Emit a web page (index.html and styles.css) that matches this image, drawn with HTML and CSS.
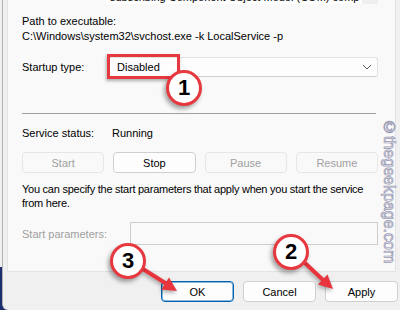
FILE: index.html
```html
<!DOCTYPE html>
<html lang="en">
<head>
  <meta charset="UTF-8" />
  <title>Service Properties</title>
  <link rel="stylesheet" href="styles.css">
</head>
<body>
  <div class="screen">
    <div class="window">
      <div class="panel">
        <!-- description box, scrolled off the top -->
        <div class="desc">
          <span class="desc-text">subscribing Component Object Model (COM) comp</span>
          <i class="desc-scroll"></i>
        </div>

        <div class="path">
          <div>Path to executable:</div>
          <div>C:\Windows\system32\svchost.exe -k LocalService -p</div>
        </div>

        <div class="row startup">
          <span class="label">Startup type:</span>
          <div class="select">
            <span>Disabled</span>
            <svg class="chevron" width="10" height="6" viewBox="0 0 10 6"><path d="M1 1 L5 5 L9 1" fill="none" stroke="#5a5a5a" stroke-width="1"/></svg>
          </div>
        </div>

        <div class="sep"></div>

        <div class="row status">
          <span class="label status-label">Service status:</span>
          <span>Running</span>
        </div>

        <div class="btn-row">
          <button class="btn" disabled>Start</button>
          <button class="btn">Stop</button>
          <button class="btn" disabled>Pause</button>
          <button class="btn" disabled>Resume</button>
        </div>

        <p class="hint">You can specify the start parameters that apply when you start the service<br>from here.</p>

        <div class="row params">
          <span class="label params-label">Start parameters:</span>
          <div class="input"></div>
        </div>
      </div>

      <div class="footer">
        <button class="btn wide default">OK</button>
        <button class="btn wide">Cancel</button>
        <button class="btn wide">Apply</button>
      </div>
    </div>

    <!-- annotations -->
    <div class="mark"></div>
    <svg class="arrows" width="400" height="310" viewBox="0 0 400 310">
      <line x1="143" y1="269" x2="166" y2="283.5" stroke="#e8343c" stroke-width="4"/>
      <polygon points="177,291 161.4,289.4 169,277.6" fill="#e8343c"/>
      <line x1="305" y1="263" x2="323" y2="280" stroke="#e8343c" stroke-width="4"/>
      <polygon points="333,289 317.9,284.6 327.5,274.4" fill="#e8343c"/>
    </svg>
    <div class="badge badge-1">1</div>
    <div class="badge badge-2">2</div>
    <div class="badge badge-3">3</div>

    <div class="watermark">©thegeekpage.com</div>
  </div>
</body>
</html>
```

FILE: styles.css
```css
body {
  margin: 0;
  font-family: 'Liberation Sans', Arial, sans-serif;
  font-size: 11px;
  color: #000;
  background-color: #f0f0f0;
}

.screen {
  position: relative;
  width: 400px;
  height: 310px;
  overflow: hidden;
  background: linear-gradient(#f0f0f0 86%, #1d2f73 86%);
}

.window {
  margin-left: 2px;
  height: 310px;
  background-color: #f0f0f0;
  border-left: 1px solid #b4b4b4;
  border-bottom-left-radius: 6px;
}

.panel {
  margin-left: 4px;
  width: 389px;
  height: 272px;
  box-sizing: border-box;
  padding: 0 17px 0 14px;
  background-color: #f9f9f9;
  border: 1px solid #e3e3e3;
  border-top: none;
}

/* cut-off description box */
.desc {
  display: flex;
  height: 4px;
  margin-left: 84px;
  overflow: hidden;
}

.desc-text {
  flex: 1;
  padding-left: 4px;
  margin-top: -10px;
  line-height: 14px;
  background-color: #fff;
  white-space: nowrap;
  overflow: hidden;
}

.desc-scroll {
  width: 16px;
  background-color: #efefef;
}

.path {
  margin-top: 10px;
  line-height: 15px;
}

.row {
  display: flex;
  align-items: center;
}

.label {
  flex: none;
}

.startup {
  margin-top: 13px;
}

.startup .label {
  width: 86px;
}

.select {
  flex: 1;
  height: 20px;
  box-sizing: border-box;
  display: flex;
  align-items: center;
  justify-content: space-between;
  padding: 0 5px 0 8px;
  background-color: #fdfdfd;
  border: 1px solid #e2e2e2;
  border-bottom-color: #d0d0d0;
  border-radius: 3px;
}

.sep {
  margin-top: 36px;
  margin-right: 2px;
  height: 1px;
  background-color: #a0a0a0;
}

.status {
  margin-top: 12px;
  line-height: 15px;
}

.status-label {
  width: 90px;
}

.btn-row {
  margin-top: 11px;
  display: grid;
  grid-template-columns: repeat(4, 1fr);
  gap: 9px;
}

.btn {
  height: 21px;
  padding: 0;
  font-family: 'Liberation Sans', Arial, sans-serif;
  font-size: 11px;
  color: #000;
  background-color: #fdfdfd;
  border: 1px solid #d0d0d0;
  border-radius: 4px;
}

.btn:disabled {
  color: #a0a0a0;
  background-color: #f9f9f9;
  border-color: #e6e6e6;
}

.hint {
  margin: 9px 0 0;
  line-height: 14px;
  letter-spacing: -0.25px;
  white-space: nowrap;
}

.params {
  margin-top: 12px;
}

.params-label {
  width: 108px;
  color: #a0a0a0;
}

.input {
  flex: 1;
  height: 23px;
  box-sizing: border-box;
  border: 1px solid #cdcdcd;
  background-color: #f9f9f9;
}

.footer {
  display: flex;
  justify-content: flex-end;
  gap: 9px;
  padding: 9px 2px 0 0;
}

.wide {
  width: 73px;
}

.default {
  border-color: #0063b1;
  box-shadow: inset 0 0 0 1px rgba(0, 99, 177, 0.45);
}

/* annotations */
.mark {
  position: absolute;
  left: 107px;
  top: 54px;
  width: 67px;
  height: 19px;
  border: 3px solid #e8383f;
  box-shadow: -1px 2px 3px rgba(0, 0, 0, 0.3);
}

.arrows {
  position: absolute;
  left: 0;
  top: 0;
  filter: drop-shadow(-1px 2px 2px rgba(0, 0, 0, 0.35));
}

.badge {
  position: absolute;
  width: 30px;
  height: 30px;
  border: 3px solid #e8383f;
  border-radius: 50%;
  background-color: #fff;
  box-shadow: -2px 3px 4px rgba(0, 0, 0, 0.35);
  font-family: 'Liberation Sans', Arial, sans-serif;
  font-size: 22px;
  font-weight: bold;
  line-height: 30px;
  text-align: center;
}

.badge-1 {
  left: 166px;
  top: 70px;
}

.badge-2 {
  left: 273px;
  top: 234px;
}

.badge-3 {
  left: 110px;
  top: 243px;
}

.watermark {
  position: absolute;
  left: 380px;
  top: 119px;
  writing-mode: vertical-rl;
  font-family: 'Liberation Sans', Arial, sans-serif;
  font-size: 16px;
  color: #e6e6ee;
  -webkit-text-stroke: 0.7px #9a9ab4;
}
```
